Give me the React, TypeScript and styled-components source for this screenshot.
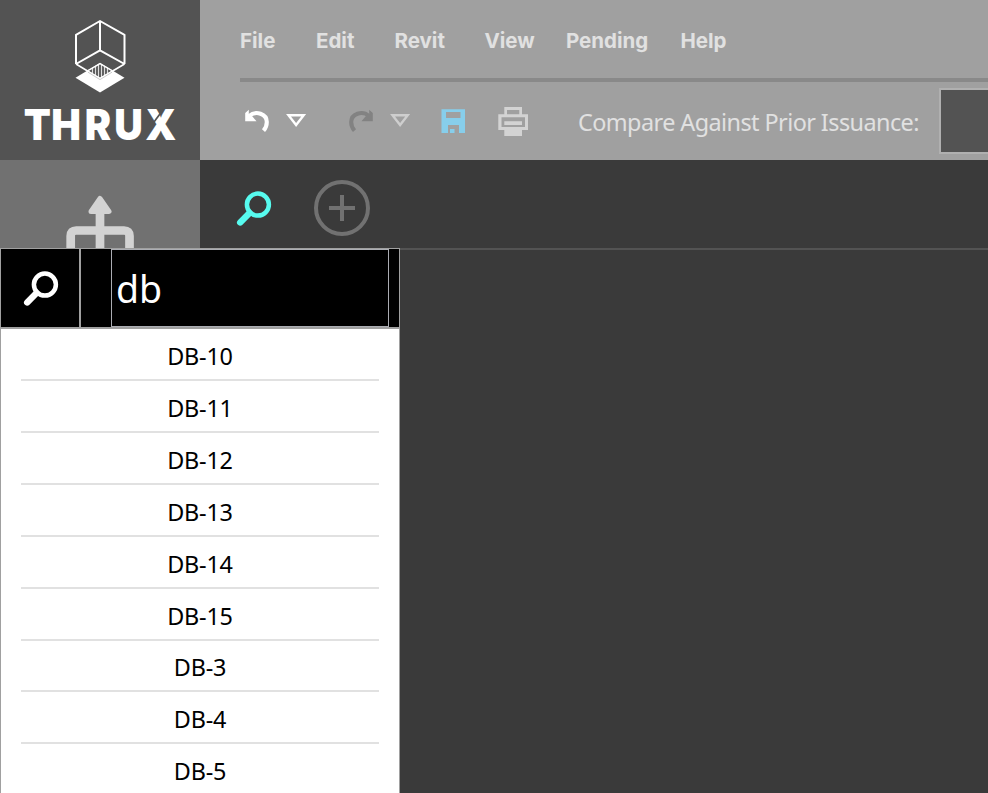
import React from "react";
import styled, { createGlobalStyle } from "styled-components";

const GlobalStyle = createGlobalStyle`
  * { box-sizing: border-box; }
  body { margin: 0; background: #3a3a3a; overflow: hidden; }
  svg { display: block; }
`;

const uiFont = `"Noto Sans", "Open Sans", sans-serif`;

const Page = styled.div`
  position: relative;
  display: grid;
  grid-template-columns: 200px 1fr;
  grid-template-rows: 160px 1fr;
  width: 988px;
  height: 793px;
  overflow: hidden;
  background: #3a3a3a;
  font-family: ${uiFont};
`;

const Brand = styled.div`
  background: #535353;
`;

const Header = styled.header`
  display: flex;
  flex-direction: column;
  min-width: 0;
  background: #a0a0a0;
  overflow: hidden;
`;

const MenuBar = styled.nav`
  display: grid;
  grid-template-columns: 76px 78.5px 90px 81.5px 114.5px auto;
  height: 78px;
  padding: 28px 0 0 40px;
  flex: none;
`;

const MenuItem = styled.a`
  color: #e1e1e1;
  font: 700 20.5px/25px Inter, sans-serif;
  white-space: nowrap;
`;

const HeaderRule = styled.div`
  flex: none;
  height: 4px;
  margin-left: 40px;
  background: #898989;
`;

const Toolbar = styled.div`
  display: flex;
  align-items: flex-start;
  height: 78px;
  padding-top: 6px;
`;

const ToolIcons = styled.div`
  flex: none;
  width: 378px;
  padding-top: 16px;
`;

const CompareLabel = styled.span`
  flex: none;
  width: 361px;
  padding-top: 18px;
  color: #e1e1e1;
  font-size: 23.4px;
  line-height: 32px;
  letter-spacing: -0.56px;
  white-space: nowrap;
`;

const IssuanceSelect = styled.div`
  flex: none;
  width: 100px;
  height: 66px;
  border: 2px solid #b0b0b0;
  background: #535353;
`;

const Sidebar = styled.aside`
  display: flex;
  justify-content: center;
  padding-top: 32px;
  background: #717171;
`;

const Workspace = styled.main`
  background: #3a3a3a;
`;

const TabBar = styled.div`
  display: flex;
  align-items: center;
  gap: 40px;
  height: 90px;
  padding: 20px 0 12px 34px;
  border-bottom: 2px solid #535353;
`;

const SearchPanel = styled.section`
  position: absolute;
  left: 0;
  top: 248px;
  width: 400px;
  height: 545px;
  border: 1px solid #a0a0a0;
  border-bottom: 0;
  background: #fff;
  overflow: hidden;
`;

const SearchRow = styled.div`
  display: flex;
  height: 80px;
  border-bottom: 2px solid #a0a0a0;
  background: #000;
`;

const SearchButton = styled.div`
  flex: none;
  width: 80px;
  padding: 19px 0 0 20px;
  border-right: 2px solid #a0a0a0;
`;

const SearchField = styled.input`
  width: 278px;
  height: 78px;
  margin: 0 0 0 30px;
  padding: 0 0 0 4px;
  border: 1px solid #abadb3;
  border-radius: 0;
  outline: 0;
  background: #000;
  color: #fff;
  font: 400 37.5px/54px ${uiFont};
`;

const Results = styled.ul`
  margin: 0;
  padding: 0 20px;
  list-style: none;
`;

const Result = styled.li<{ $height: number }>`
  height: ${(p) => p.$height}px;
  padding-top: ${(p) => p.$height - 41}px;
  border-bottom: 2px solid #e1e1e1;
  color: #000;
  font-size: 23.4px;
  line-height: 32px;
  letter-spacing: -0.2px;
  text-align: center;
`;

const Logo = () => (
  <svg width="200" height="160" viewBox="0 0 200 160">
    <path d="M100 63 124.5 77.7 100 92.5 75.5 77.7Z" fill="#fff" />
    <path d="M100 63.5 112 70.7 100 78 88 70.7Z" fill="#535353" />
    <path d="M92.5 68v5.5M95.5 66v9.5M98.5 64.5v12.5M101.5 64.5v12.5M104.5 66v9.5M107.5 68v5.5" stroke="#ddd" strokeWidth="1.2" />
    <path d="M88 70.7 100 63.5 112 70.7" fill="none" stroke="#fff" strokeWidth="1.5" />
    <path d="M76 64 100 78.5 124.5 64" fill="none" stroke="#fff" strokeWidth="1.6" />
    <path d="M88 72.2 100 79.6 112 72.2" fill="none" stroke="#aaa" strokeWidth=".6" />
    <path d="M76 64V34.8L100 21l24.5 13.8V64M100 21v29.3M76 64l24-13.7L124.5 64" fill="none" stroke="#fff" strokeWidth="2" strokeLinejoin="round" />
    <text transform="translate(0 139.7) scale(.92 1)" x="25.7 55.8 92 124.3 157.8" y="0" fill="#fff" fontFamily="Inter, sans-serif" fontWeight="900" fontSize="43">THRUX</text>
    <path d="M162.5 110.5 152.5 124" stroke="#535353" strokeWidth="1.7" />
  </svg>
);

const Magnifier = ({ color }: { color: string }) => (
  <svg width="40" height="40" viewBox="0 0 40 40">
    <circle cx="23.9" cy="16.6" r="11" fill="none" stroke={color} strokeWidth="4.5" />
    <path d="M15.5 25 6.2 34.4" stroke={color} strokeWidth="6.4" strokeLinecap="round" />
  </svg>
);

const ToolbarIcons = () => (
  <svg width="378" height="36" viewBox="200 104 378 36">
    <g fill="none" stroke="#fff">
      <path d="M249 116C256 110 266.8 114 266.8 122C266.8 125.5 265.5 128.5 263.5 130.7" strokeWidth="4.1" />
      <path d="M288.5 115.2H303.7L296.1 125Z" strokeWidth="2.4" />
    </g>
    <path d="M245.2 113 248.8 109.8V114L252.5 116.5 256.5 121.3H245.2Z" fill="#fff" />
    <path d="M369 116C362 110 351.2 114 351.2 122C351.2 125.5 352.5 128.5 354.5 130.7" fill="none" stroke="#828282" strokeWidth="4.1" />
    <path d="M372.8 113 369.2 109.8V114L365.5 116.5 361.5 121.3H372.8Z" fill="#828282" />
    <path d="M392.5 115.2H407.7L400.1 125Z" fill="none" stroke="#cecece" strokeWidth="2.4" />
    <path fill="#87ceeb" fillRule="evenodd" d="M441.5 109.3H465V133H459V125H448V133H441.5ZM446 112V118H460.5V112ZM450 129h4.5v4H450Z" />
    <path fill="#d3d3d3" fillRule="evenodd" d="M504.3 107H522V114.3H528V130H522V136H504.3V130H498.3V114.3H504.3ZM507 110V114.3H519.3V110ZM501.5 117.3V127H525V117.3ZM504.3 121.3H522V125H504.3Z" />
  </svg>
);

const AddTab = () => (
  <svg width="56" height="56" viewBox="0 0 56 56" fill="none" stroke="#717171" strokeWidth="4">
    <circle cx="28" cy="28" r="26" />
    <path d="M15 28h26M28 15v26" />
  </svg>
);

const Riser = () => (
  <svg width="80" height="60" viewBox="60 192 80 60" fill="none" stroke="#d3d3d3">
    <path d="M70.7 252V236Q70.7 230.5 76.2 230.5H124Q129.5 230.5 129.5 236V252M100 252V210" strokeWidth="8.7" />
    <path d="M100 198.5 109 211.5H91Z" fill="#d3d3d3" strokeWidth="5" strokeLinejoin="round" />
  </svg>
);

const menu = ["File", "Edit", "Revit", "View", "Pending", "Help"];

const results = [
  { name: "DB-10", height: 52 },
  { name: "DB-11", height: 52 },
  { name: "DB-12", height: 52 },
  { name: "DB-13", height: 52 },
  { name: "DB-14", height: 52 },
  { name: "DB-15", height: 52 },
  { name: "DB-3", height: 51 },
  { name: "DB-4", height: 52 },
  { name: "DB-5", height: 52 },
];

export default function App() {
  return (
    <>
      <GlobalStyle />
      <Page>
        <Brand><Logo /></Brand>
        <Header>
          <MenuBar>
            {menu.map((label) => <MenuItem key={label}>{label}</MenuItem>)}
          </MenuBar>
          <HeaderRule />
          <Toolbar>
            <ToolIcons><ToolbarIcons /></ToolIcons>
            <CompareLabel>Compare Against Prior Issuance:</CompareLabel>
            <IssuanceSelect />
          </Toolbar>
        </Header>
        <Sidebar><Riser /></Sidebar>
        <Workspace>
          <TabBar>
            <Magnifier color="#57fbef" />
            <AddTab />
          </TabBar>
        </Workspace>
        <SearchPanel>
          <SearchRow>
            <SearchButton><Magnifier color="#fff" /></SearchButton>
            <SearchField defaultValue="db" aria-label="Search" />
          </SearchRow>
          <Results>
            {results.map((r) => <Result key={r.name} $height={r.height}>{r.name}</Result>)}
          </Results>
        </SearchPanel>
      </Page>
    </>
  );
}
